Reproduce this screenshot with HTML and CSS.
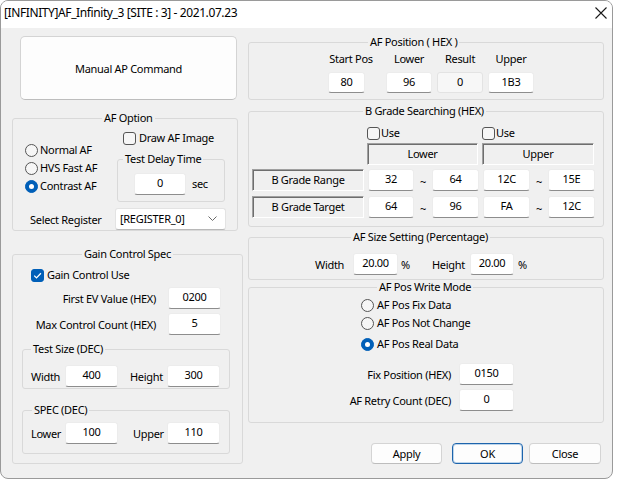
FILE: index.html
```html
<!DOCTYPE html>
<html>
<head>
<meta charset="utf-8">
<link rel="stylesheet" href="styles.css">
</head>
<body>
<div class="window">
  <div class="titlebar">
    <span class="wtitle">[INFINITY]AF_Infinity_3 [SITE : 3] - 2021.07.23</span>
    <svg class="xicon" width="12" height="12" viewBox="0 0 12 12"><path d="M0.5 0.5L11.5 11.5M11.5 0.5L0.5 11.5" stroke="#1a1a1a" stroke-width="1.1" fill="none"/></svg>
  </div>
  <div class="client">
    <div class="left">
      <div class="btn big">Manual AP Command</div>

      <div class="group g-afopt">
        <div class="gt gt-afopt">AF Option</div>
        <div class="afopt-body">
          <div class="radios-left">
            <div class="opt"><span class="radio"></span>Normal AF</div>
            <div class="opt mt4"><span class="radio"></span>HVS Fast AF</div>
            <div class="opt mt4"><span class="radio on"></span>Contrast AF</div>
          </div>
          <div class="afopt-right">
            <div class="opt chk-draw"><span class="check"></span>Draw AF Image</div>
            <div class="group g-delay">
              <div class="gt gt-delay">Test Delay Time</div>
              <div class="delay-row"><span class="tb w52">0</span><span class="unit">sec</span></div>
            </div>
          </div>
        </div>
        <div class="sel-row">
          <span class="sel-label">Select Register</span>
          <div class="combo"><span>[REGISTER_0]</span><svg class="chev" width="9" height="5" viewBox="0 0 9 5"><path d="M0.5 0.5L4.5 4.5L8.5 0.5" stroke="#6a6a6a" stroke-width="1" fill="none"/></svg></div>
        </div>
      </div>

      <div class="group g-gain">
        <div class="gt">Gain Control Spec</div>
        <div class="opt chk-gain"><span class="check on"><svg width="13" height="13" viewBox="0 0 13 13"><path d="M3.2 6.6L5.5 8.9L9.9 4.3" stroke="#fff" stroke-width="1.3" fill="none"/></svg></span>Gain Control Use</div>
        <div class="frow fr-ev"><span class="flabel">First EV Value (HEX)</span><span class="tb w53">0200</span></div>
        <div class="frow fr-max"><span class="flabel">Max Control Count (HEX)</span><span class="tb w53">5</span></div>
        <div class="group g-size">
          <div class="gt gt-size">Test Size (DEC)</div>
          <div class="pair-row">
            <span class="pl w34">Width</span><span class="tb w53">400</span>
            <span class="pl pl-h">Height</span><span class="tb w53">300</span>
          </div>
        </div>
        <div class="group g-spec">
          <div class="gt gt-spec">SPEC (DEC)</div>
          <div class="pair-row spec-row">
            <span class="pl w34">Lower</span><span class="tb w53">100</span>
            <span class="pl pl-u">Upper</span><span class="tb w53">110</span>
          </div>
        </div>
      </div>
    </div>

    <div class="right">
      <div class="group g-pos">
        <div class="gt gt-pos">AF Position ( HEX )</div>
        <div class="pos-row">
          <div class="pcell pc1"><span class="plab">Start Pos</span><span class="tb h21 w37">80</span></div>
          <div class="pcell pc2"><span class="plab">Lower</span><span class="tb h21 w46">96</span></div>
          <div class="pcell pc3"><span class="plab">Result</span><span class="tb h21 w46 ro">0</span></div>
          <div class="pcell pc3"><span class="plab">Upper</span><span class="tb h21 w46">1B3</span></div>
        </div>
      </div>

      <div class="group g-bgrade">
        <div class="gt gt-bgrade">B Grade Searching (HEX)</div>
        <div class="use-row">
          <div class="opt use1"><span class="check cb-use"></span>Use</div>
          <div class="opt"><span class="check cb-use"></span>Use</div>
        </div>
        <div class="hdr-row">
          <div class="sunk hdr-l">Lower</div>
          <div class="sunk hdr-u">Upper</div>
        </div>
        <div class="grid-row gr1">
          <div class="sunk rlabel">B Grade Range</div>
          <span class="tb w46 ml4">32</span><span class="tilde">~</span><span class="tb w47">64</span>
          <span class="tb w47 ml4">12C</span><span class="tilde">~</span><span class="tb w47">15E</span>
        </div>
        <div class="grid-row gr2">
          <div class="sunk rlabel">B Grade Target</div>
          <span class="tb w46 ml4">64</span><span class="tilde">~</span><span class="tb w47">96</span>
          <span class="tb w47 ml4">FA</span><span class="tilde">~</span><span class="tb w47">12C</span>
        </div>
      </div>

      <div class="group g-size2">
        <div class="gt gt-size2">AF Size Setting (Percentage)</div>
        <div class="size-row">
          <span class="sl sl-w">Width</span><span class="tb w45">20.00</span><span class="pct">%</span>
          <span class="sl">Height</span><span class="tb w44">20.00</span><span class="pct2">%</span>
        </div>
      </div>

      <div class="group g-write">
        <div class="gt gt-write">AF Pos Write Mode</div>
        <div class="wradios">
          <div class="opt wr1"><span class="radio"></span>AF Pos Fix Data</div>
          <div class="opt wr2"><span class="radio"></span>AF Pos Not Change</div>
          <div class="opt wr3"><span class="radio on"></span>AF Pos Real Data</div>
        </div>
        <div class="wrow wrow1"><span class="wlabel">Fix Position (HEX)</span><span class="tb w55">0150</span></div>
        <div class="wrow wrow2"><span class="wlabel">AF Retry Count (DEC)</span><span class="tb w55">0</span></div>
      </div>

      <div class="btn-row">
        <div class="btn b-apply">Apply</div>
        <div class="btn b-ok">OK</div>
        <div class="btn b-close">Close</div>
      </div>
    </div>
  </div>
</div>
</body>
</html>
```

FILE: styles.css
```css
* { box-sizing: border-box; }
body {
  margin: 0;
  background: #ffffff;
  font-family: "Noto Sans", "Open Sans", sans-serif;
  font-size: 11px;
  letter-spacing: -0.3px;
  color: #000;
}
.window {
  width: 613px;
  height: 479px;
  border: 1px solid #9a9a9a;
  border-radius: 8px;
  overflow: hidden;
  background: #f0f0f0;
  display: flex;
  flex-direction: column;
}
.titlebar {
  height: 27px;
  flex: none;
  background: #ffffff;
  display: flex;
  align-items: flex-start;
  padding-left: 3px;
}
.wtitle {
  font-size: 12px;
  letter-spacing: -0.4px;
  line-height: 16px;
  margin-top: 4px;
  color: #000;
}
.xicon { margin-left: auto; margin-right: 5px; margin-top: 6px; }

.client { display: flex; padding-left: 11px; }
.left { width: 231px; display: flex; flex-direction: column; }
.right { width: 356px; margin-left: 5px; display: flex; flex-direction: column; }

/* generic */
.group {
  border: 1px solid #d9d9d9;
  border-radius: 3px;
  display: flex;
  flex-direction: column;
  flex: none;
}
.gt {
  display: table;
  margin: -8px auto 0;
  padding: 0 2px;
  height: 14px;
  line-height: 14px;
  background: #f0f0f0;
  white-space: nowrap;
}
.opt { display: flex; align-items: center; height: 14px; line-height: 14px; white-space: nowrap; }
.mt4 { margin-top: 4px; }
.radio {
  width: 13px; height: 13px; border-radius: 50%;
  border: 1px solid #555555;
  background: #f6f6f6;
  flex: none;
  margin-right: 2px;
  display: flex; align-items: center; justify-content: center;
}
.radio.on { background: #005fb8; border-color: #005fb8; }
.radio.on::after { content: ""; width: 5px; height: 5px; border-radius: 50%; background: #fff; }
.check {
  width: 13px; height: 13px; border-radius: 3px;
  border: 1px solid #555555;
  background: #f6f6f6;
  flex: none;
  margin-right: 3px;
  display: flex; align-items: center; justify-content: center;
}
.check.on { background: #005fb8; border-color: #005fb8; }
.check.on svg { flex: none; margin: -1px; }
.tb {
  display: flex; align-items: center; justify-content: center;
  height: 22px;
  padding-bottom: 3px;
  background: #ffffff;
  border: 1px solid #ececec;
  border-bottom: 1px solid #8d8d8d;
  border-radius: 3px;
  flex: none;
  white-space: nowrap;
}
.tb.h21 { height: 21px; }
.tb.ro { background: #f7f7f7; border-color: #e3e3e3; border-bottom-color: #e3e3e3; }
.w37 { width: 37px; } .w44 { width: 44px; } .w45 { width: 45px; } .w46 { width: 46px; }
.w47 { width: 47px; } .w52 { width: 52px; } .w53 { width: 53px; } .w55 { width: 55px; }
.ml4 { margin-left: 4px; }

.btn {
  display: flex; align-items: center; justify-content: center;
  background: #fdfdfd;
  border: 1px solid #d4d4d4;
  border-bottom-color: #bdbdbd;
  border-radius: 4px;
  flex: none;
}

/* left column */
.big { margin: 8px 0 0 8px; width: 217px; height: 64px; border-radius: 5px; }
.g-afopt { margin-top: 18px; width: 226px; height: 113px; }
.gt-afopt { margin-left: 89px; }
.afopt-body { display: flex; align-items: flex-start; }
.radios-left { width: 104px; padding-left: 12px; margin-top: 18px; display: flex; flex-direction: column; }
.afopt-right { display: flex; flex-direction: column; }
.chk-draw { margin-top: 6px; margin-left: 6px; }
.g-delay { margin-top: 14px; width: 108px; height: 43px; }
.gt-delay { margin-left: 5px; }
.delay-row { display: flex; align-items: center; margin-top: 7px; margin-left: 16px; }
.unit { margin-left: 6px; padding-bottom: 1px; }
.sel-row { display: flex; align-items: center; margin-top: 6px; padding-left: 17px; height: 22px; }
.sel-label { width: 85px; }
.combo {
  width: 111px; height: 22px;
  display: flex; align-items: center;
  padding: 0 8px 1px 4px;
  background: #fff;
  border: 1px solid #e3e3e3;
  border-bottom-color: #b8b8b8;
  border-radius: 3px;
}
.chev { margin-left: auto; }

.g-gain { margin-top: 23px; width: 231px; height: 210px; }
.chk-gain { margin-top: 7px; padding-left: 18px; }
.frow { display: flex; align-items: center; justify-content: flex-end; padding-right: 21px; }
.flabel { margin-right: 12px; }
.fr-ev { margin-top: 5px; }
.fr-max { margin-top: 4px; }
.g-size { margin: 14px 0 0 9px; width: 208px; height: 40px; }
.gt-size { margin-left: 8px; }
.pair-row { display: flex; align-items: center; margin-top: 9px; padding-left: 8px; }
.pl { white-space: nowrap; }
.w34 { width: 34px; }
.pl-h { margin-left: 12px; width: 37px; }
.g-spec { margin: 21px 0 0 9px; width: 208px; height: 44px; }
.gt-spec { margin-left: 9px; }
.spec-row { margin-top: 5px; }
.pl-u { margin-left: 15px; width: 34px; }

/* right column */
.g-pos { margin-top: 14px; height: 58px; }
.gt-pos { margin-left: 119px; }
.pos-row { display: flex; margin-top: 3px; }
.pcell { display: flex; flex-direction: column; align-items: center; width: 46px; }
.pcell .tb { margin-top: 6px; }
.pcell .w37 { align-self: flex-start; }
.plab { height: 14px; line-height: 14px; white-space: nowrap; }
.pc1 { margin-left: 79px; }
.pc2 { margin-left: 12px; }
.pc3 { margin-left: 5px; }

.g-bgrade { margin-top: 11px; height: 116px; }
.gt-bgrade { margin-left: 114px; }
.use-row { display: flex; margin-top: 8px; padding-left: 118px; }
.use1 { width: 115px; }
.cb-use { margin-right: 1px; }
.hdr-row { display: flex; margin-top: 3px; padding-left: 118px; }
.sunk {
  display: flex; align-items: center; justify-content: center;
  height: 22px;
  background: #f0f0f0;
  border: 1px solid;
  border-color: #a0a0a0 #ffffff #ffffff #a0a0a0;
  box-shadow: inset 1px 1px 0 #6e6e6e;
  padding-bottom: 1px;
  flex: none;
}
.hdr-l { width: 111px; }
.hdr-u { width: 112px; margin-left: 4px; }
.grid-row { display: flex; align-items: center; padding-left: 3px; }
.gr1 { margin-top: 4px; }
.gr2 { margin-top: 5px; }
.rlabel { width: 112px; }
.tilde { width: 18px; text-align: center; flex: none; padding-top: 2px; }

.g-size2 { margin-top: 10px; height: 43px; }
.gt-size2 { margin-left: 102px; }
.size-row { display: flex; align-items: center; margin-top: 9px; padding-left: 66px; }
.sl { width: 38px; flex: none; }
.pct { margin-left: 3px; width: 31px; flex: none; }
.pct2 { margin-left: 4px; }

.g-write { margin-top: 7px; height: 136px; }
.gt-write { margin-left: 128px; }
.wradios { display: flex; flex-direction: column; padding-left: 112px; }
.wradios .radio { margin-right: 3px; }
.wr1 { margin-top: 4px; }
.wr2 { margin-top: 4px; }
.wr3 { margin-top: 7px; }
.wrow { display: flex; align-items: center; }
.wlabel { width: 202px; text-align: right; margin-right: 8px; }
.wrow1 { margin-top: 12px; }
.wrow2 { margin-top: 4px; }

.btn-row { display: flex; margin-top: 20px; }
.btn-row .btn { height: 21px; padding-bottom: 1px; }
.b-apply { margin-left: 123px; width: 71px; }
.b-ok { margin-left: 10px; width: 71px; border-color: #1d64ac; box-shadow: inset 0 0 0 1px rgba(0, 95, 184, 0.25); }
.b-close { margin-left: 6px; width: 72px; }
```
